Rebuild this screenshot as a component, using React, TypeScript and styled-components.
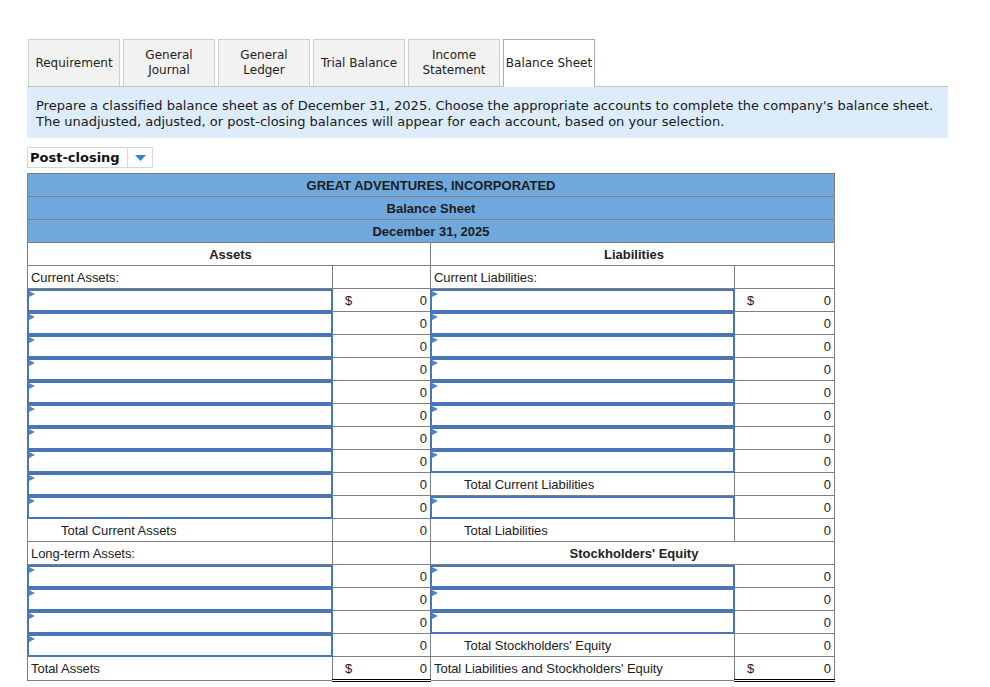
import React from "react";
import styled, { createGlobalStyle } from "styled-components";

const Global = createGlobalStyle`
  html, body { margin: 0; padding: 0; background: #fff; }
  body { font-family: "DejaVu Sans", Verdana, sans-serif; color: #222; }
`;

const Page = styled.div`
  padding: 39px 0 0 27px;
  width: 921px;
`;

const Tabs = styled.div`
  display: flex;
  gap: 3px;
  height: 47px;
  border-bottom: 1px solid #c4c4c4;
  box-sizing: content-box;
  padding-left: 1px;
`;

const Tab = styled.div<{ $active?: boolean }>`
  width: 92px;
  box-sizing: border-box;
  display: flex;
  align-items: center;
  justify-content: center;
  text-align: center;
  font-size: 12px;
  line-height: 15px;
  color: #222;
  background: ${(p) => (p.$active ? "#fff" : "#f2f2f2")};
  border: 1px solid ${(p) => (p.$active ? "#a9a9a9" : "#cfcfcf")};
  border-bottom: ${(p) => (p.$active ? "1px solid #fff" : "none")};
  margin-bottom: ${(p) => (p.$active ? "-1px" : "0")};
  height: ${(p) => (p.$active ? "48px" : "47px")};
`;

const TabText = styled.span`
  white-space: pre-line;
`;

const Instructions = styled.div`
  background: #dcecfa;
  height: 51px;
  box-sizing: border-box;
  padding: 11px 9px 0 9px;
  font-size: 13px;
  line-height: 16px;
  color: #1a1a1a;
`;

const Select = styled.div`
  margin-top: 9px;
  width: 126px;
  height: 21px;
  box-sizing: border-box;
  border: 1px solid #d6d6d6;
  display: flex;
  align-items: stretch;
`;

const SelectLabel = styled.div`
  flex: 1;
  font-weight: bold;
  font-size: 13px;
  line-height: 19px;
  padding-left: 2px;
  color: #111;
  border-right: 1px solid #d6d6d6;
`;

const SelectArrow = styled.div`
  width: 24px;
  display: flex;
  align-items: center;
  justify-content: center;
`;

const Sheet = styled.table`
  margin-top: 5px;
  border-collapse: collapse;
  table-layout: fixed;
  width: 807px;
  font-family: "Liberation Sans", Arial, sans-serif;
  font-size: 13px;
  color: #222;
`;

const HeadCell = styled.td`
  background: #6fa8dc;
  border: 1px solid #7f7f7f;
  height: 22px;
  padding: 0;
  text-align: center;
  font-weight: bold;
  font-size: 13px;
  color: #1c1c1c;
`;

const Cell = styled.td<{ $indent?: boolean; $center?: boolean; $bold?: boolean }>`
  border: 1px solid #7f7f7f;
  height: 22px;
  padding: 0 0 0 ${(p) => (p.$indent ? "33px" : "3px")};
  text-align: ${(p) => (p.$center ? "center" : "left")};
  font-weight: ${(p) => (p.$bold ? "bold" : "normal")};
  font-size: 13px;
  letter-spacing: ${(p) => (p.$bold ? "0" : "-0.05px")};
  white-space: nowrap;
  overflow: hidden;
`;

const InputCell = styled.td`
  border: 1px solid #7f7f7f;
  height: 22px;
  padding: 0;
`;

const InputBox = styled.div`
  position: relative;
  height: 23px;
  box-sizing: border-box;
  border: 2px solid #4a77b4;
  background: #fff;
  margin: -1px -1px -1px -1px;
`;

const Flag = styled.span`
  position: absolute;
  left: 0;
  top: 0;
  width: 0;
  height: 0;
  border-top: 3px solid transparent;
  border-bottom: 3px solid transparent;
  border-left: 6px solid #4b86cc;
`;

const Amount = styled.td<{ $total?: boolean; $grand?: boolean }>`
  border: 1px solid #7f7f7f;
  border-top: 1px solid ${(p) => (p.$total || p.$grand ? "#000" : "#7f7f7f")};
  border-bottom: ${(p) => (p.$grand ? "3px double #000" : "1px solid #7f7f7f")};
  height: 22px;
  padding: 0 3px 0 12px;
`;

const AmountInner = styled.div`
  display: flex;
  justify-content: space-between;
  align-items: center;
`;

type Side =
  | { kind: "label"; text: string; indent?: boolean }
  | { kind: "input" }
  | { kind: "header"; text: string }
  | { kind: "empty" };

type AmountSpec = { value?: string; dollar?: boolean; total?: boolean; grand?: boolean } | null;

const Input = () => (
  <InputCell>
    <InputBox>
      <Flag />
    </InputBox>
  </InputCell>
);

const AmountCellView = ({ a }: { a: AmountSpec }) => (
  <Amount $total={a?.total} $grand={a?.grand}>
    {a && a.value !== undefined ? (
      <AmountInner>
        <span>{a.dollar ? "$" : ""}</span>
        <span>{a.value}</span>
      </AmountInner>
    ) : null}
  </Amount>
);

type Row = { l: Side; la: AmountSpec; r: Side; ra: AmountSpec };

const inp: Side = { kind: "input" };
const z: AmountSpec = { value: "0" };

const rows: Row[] = [
  { l: { kind: "label", text: "Current Assets:" }, la: null, r: { kind: "label", text: "Current Liabilities:" }, ra: null },
  { l: inp, la: { value: "0", dollar: true }, r: inp, ra: { value: "0", dollar: true } },
  { l: inp, la: z, r: inp, ra: z },
  { l: inp, la: z, r: inp, ra: z },
  { l: inp, la: z, r: inp, ra: z },
  { l: inp, la: z, r: inp, ra: z },
  { l: inp, la: z, r: inp, ra: z },
  { l: inp, la: z, r: inp, ra: z },
  { l: inp, la: z, r: inp, ra: z },
  { l: inp, la: z, r: { kind: "label", text: "Total Current Liabilities", indent: true }, ra: { value: "0", total: true } },
  { l: inp, la: z, r: inp, ra: z },
  { l: { kind: "label", text: "Total Current Assets", indent: true }, la: z, r: { kind: "label", text: "Total Liabilities", indent: true }, ra: { value: "0", total: true } },
  { l: { kind: "label", text: "Long-term Assets:" }, la: null, r: { kind: "header", text: "Stockholders' Equity" }, ra: null },
  { l: inp, la: z, r: inp, ra: z },
  { l: inp, la: z, r: inp, ra: z },
  { l: inp, la: z, r: inp, ra: z },
  { l: inp, la: z, r: { kind: "label", text: "Total Stockholders' Equity", indent: true }, ra: { value: "0", total: true } },
  { l: { kind: "label", text: "Total Assets" }, la: { value: "0", dollar: true, grand: true }, r: { kind: "label", text: "Total Liabilities and Stockholders' Equity" }, ra: { value: "0", dollar: true, grand: true } },
];

const SideView = ({ s, a }: { s: Side; a: AmountSpec }) => {
  if (s.kind === "header") {
    return (
      <Cell colSpan={2} $center $bold>
        {s.text}
      </Cell>
    );
  }
  return (
    <>
      {s.kind === "input" ? (
        <Input />
      ) : s.kind === "label" ? (
        <Cell $indent={s.indent}>{s.text}</Cell>
      ) : (
        <Cell />
      )}
      <AmountCellView a={a} />
    </>
  );
};

const tabs = [
  "Requirement",
  "General\nJournal",
  "General\nLedger",
  "Trial Balance",
  "Income\nStatement",
  "Balance Sheet",
];

export default function App() {
  return (
    <>
      <Global />
      <Page>
        <Tabs>
          {tabs.map((t, i) => (
            <Tab key={t} $active={i === tabs.length - 1}>
              <TabText>{t}</TabText>
            </Tab>
          ))}
        </Tabs>
        <Instructions>
          Prepare a classified balance sheet as of December 31, 2025. Choose the appropriate accounts to complete the company's balance sheet.
          <br />
          The unadjusted, adjusted, or post-closing balances will appear for each account, based on your selection.
        </Instructions>
        <Select>
          <SelectLabel>Post-closing</SelectLabel>
          <SelectArrow>
            <svg width="11" height="6" viewBox="0 0 11 6">
              <polygon points="0,0 11,0 5.5,6" fill="#3d7fd0" />
            </svg>
          </SelectArrow>
        </Select>
        <Sheet>
          <colgroup>
            <col style={{ width: 305 }} />
            <col style={{ width: 98 }} />
            <col style={{ width: 304 }} />
            <col style={{ width: 100 }} />
          </colgroup>
          <tbody>
            <tr>
              <HeadCell colSpan={4}>GREAT ADVENTURES, INCORPORATED</HeadCell>
            </tr>
            <tr>
              <HeadCell colSpan={4}>Balance Sheet</HeadCell>
            </tr>
            <tr>
              <HeadCell colSpan={4}>December 31, 2025</HeadCell>
            </tr>
            <tr>
              <Cell colSpan={2} $center $bold>
                Assets
              </Cell>
              <Cell colSpan={2} $center $bold>
                Liabilities
              </Cell>
            </tr>
            {rows.map((r, i) => (
              <tr key={i}>
                <SideView s={r.l} a={r.la} />
                <SideView s={r.r} a={r.ra} />
              </tr>
            ))}
          </tbody>
        </Sheet>
      </Page>
    </>
  );
}
